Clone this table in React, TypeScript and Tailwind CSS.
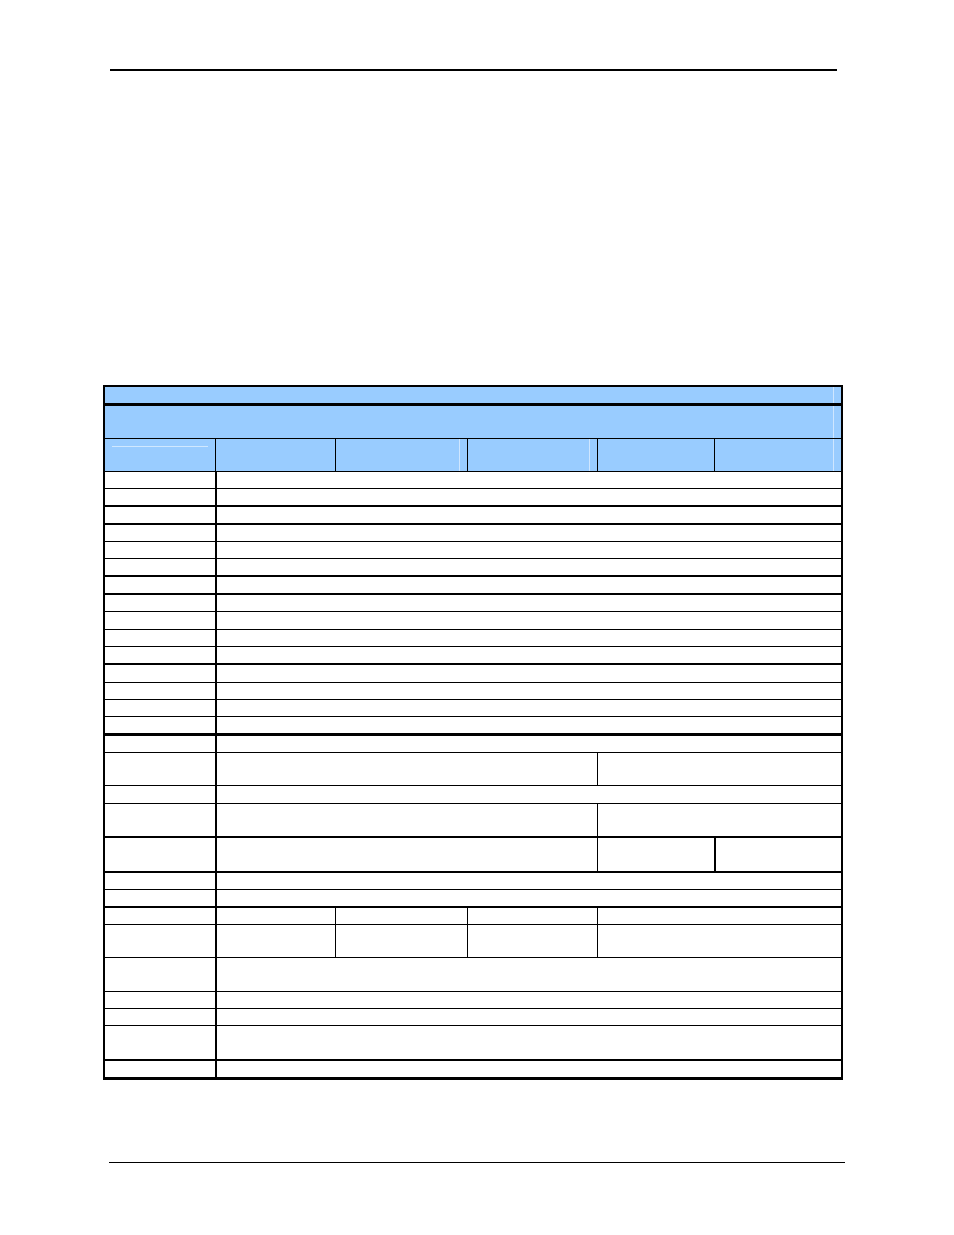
const GRID = "grid grid-cols-[110px_120px_132px_130px_117px_127px]"

type Cell = { span: string; line?: string }

// default white row: label column + one wide value column
const wide: Cell[] = [{ span: "col-span-1" }, { span: "col-span-5", line: "border-l-2" }]
// value split at 597
const half: Cell[] = [
  { span: "col-span-1" },
  { span: "col-span-3", line: "border-l-2" },
  { span: "col-span-2", line: "border-l" },
]
// value split at 597 and 714
const thirds: Cell[] = [
  { span: "col-span-1" },
  { span: "col-span-3", line: "border-l-2" },
  { span: "col-span-1", line: "border-l" },
  { span: "col-span-1", line: "border-l-2" },
]
// value split into four
const quarters: Cell[] = [
  { span: "col-span-1" },
  { span: "col-span-1", line: "border-l-2" },
  { span: "col-span-1", line: "border-l" },
  { span: "col-span-1", line: "border-l" },
  { span: "col-span-2", line: "border-l" },
]

const rows: { cls: string; cells: Cell[] }[] = [
  { cls: "h-[17px] border-b", cells: wide },
  { cls: "h-[18px] border-b-2", cells: wide },
  { cls: "h-[18px] border-b-2", cells: wide },
  { cls: "h-[17px] border-b", cells: wide },
  { cls: "h-[17px] border-b", cells: wide },
  { cls: "h-[18px] border-b-2", cells: wide },
  { cls: "h-[18px] border-b-2", cells: wide },
  { cls: "h-[17px] border-b", cells: wide },
  { cls: "h-[18px] border-b", cells: wide },
  { cls: "h-[17px] border-b", cells: wide },
  { cls: "h-[18px] border-b-2", cells: wide },
  { cls: "h-[18px] border-b", cells: wide },
  { cls: "h-[17px] border-b", cells: wide },
  { cls: "h-[17px] border-b", cells: wide },
  { cls: "h-[19px] border-b-[3px]", cells: wide },
  { cls: "h-[17px] border-b", cells: wide },
  { cls: "h-[33px] border-b", cells: half },
  { cls: "h-[18px] border-b", cells: wide },
  { cls: "h-[34px] border-b-2", cells: half },
  { cls: "h-[35px] border-b-2", cells: thirds },
  { cls: "h-[17px] border-b", cells: wide },
  { cls: "h-[18px] border-b-2", cells: wide },
  { cls: "h-[17px] border-b", cells: quarters },
  { cls: "h-[33px] border-b", cells: quarters },
  { cls: "h-[34px] border-b", cells: wide },
  { cls: "h-[17px] border-b", cells: wide },
  { cls: "h-[17px] border-b", cells: wide },
  { cls: "h-[35px] border-b-2", cells: wide },
  { cls: "h-[16px]", cells: wide },
]

export default function App() {
  return (
    <div className="w-[954px] h-[1235px] bg-white font-['Liberation_Sans',Arial,sans-serif] pt-[69px]">
      {/* header rule */}
      <div className="ml-[110px] w-[727px] h-[2px] bg-black" />

      {/* table */}
      <div className="ml-[103px] mt-[314px] w-[740px] border-2 border-b-[3px] border-black">
        {/* blue title bands */}
        <div className="bg-[#99ccff]">
          <div className="h-[19px] border-b-[3px] border-black">
            <div className="h-full mr-[7px] border-r border-[#cfe6ff]" />
          </div>
          <div className="h-[33px] border-b border-black">
            <div className="h-full mr-[7px] border-r border-[#cfe6ff]" />
          </div>
          <div className={`${GRID} h-[33px] border-b border-black`}>
            <div className="px-[7px] pt-[7px]">
              <div className="border-t border-[#d0e8ff]" />
            </div>
            <div className="border-l border-black" />
            <div className="border-l border-black pr-[7px]">
              <div className="h-full border-r border-[#cfe6ff]" />
            </div>
            <div className="border-l border-black pr-[7px]">
              <div className="h-full border-r border-[#cfe6ff]" />
            </div>
            <div className="border-l border-black" />
            <div className="border-l border-black pr-[7px]">
              <div className="h-full border-r border-[#cfe6ff]" />
            </div>
          </div>
        </div>

        {/* body rows */}
        {rows.map((r, i) => (
          <div key={i} className={`${GRID} ${r.cls} border-black`}>
            {r.cells.map((c, j) => (
              <div key={j} className={`${c.span} ${c.line ?? ""} border-black`} />
            ))}
          </div>
        ))}
      </div>

      {/* footer rule */}
      <div className="ml-[109px] mt-[82px] w-[736px] h-px bg-black" />
    </div>
  )
}
